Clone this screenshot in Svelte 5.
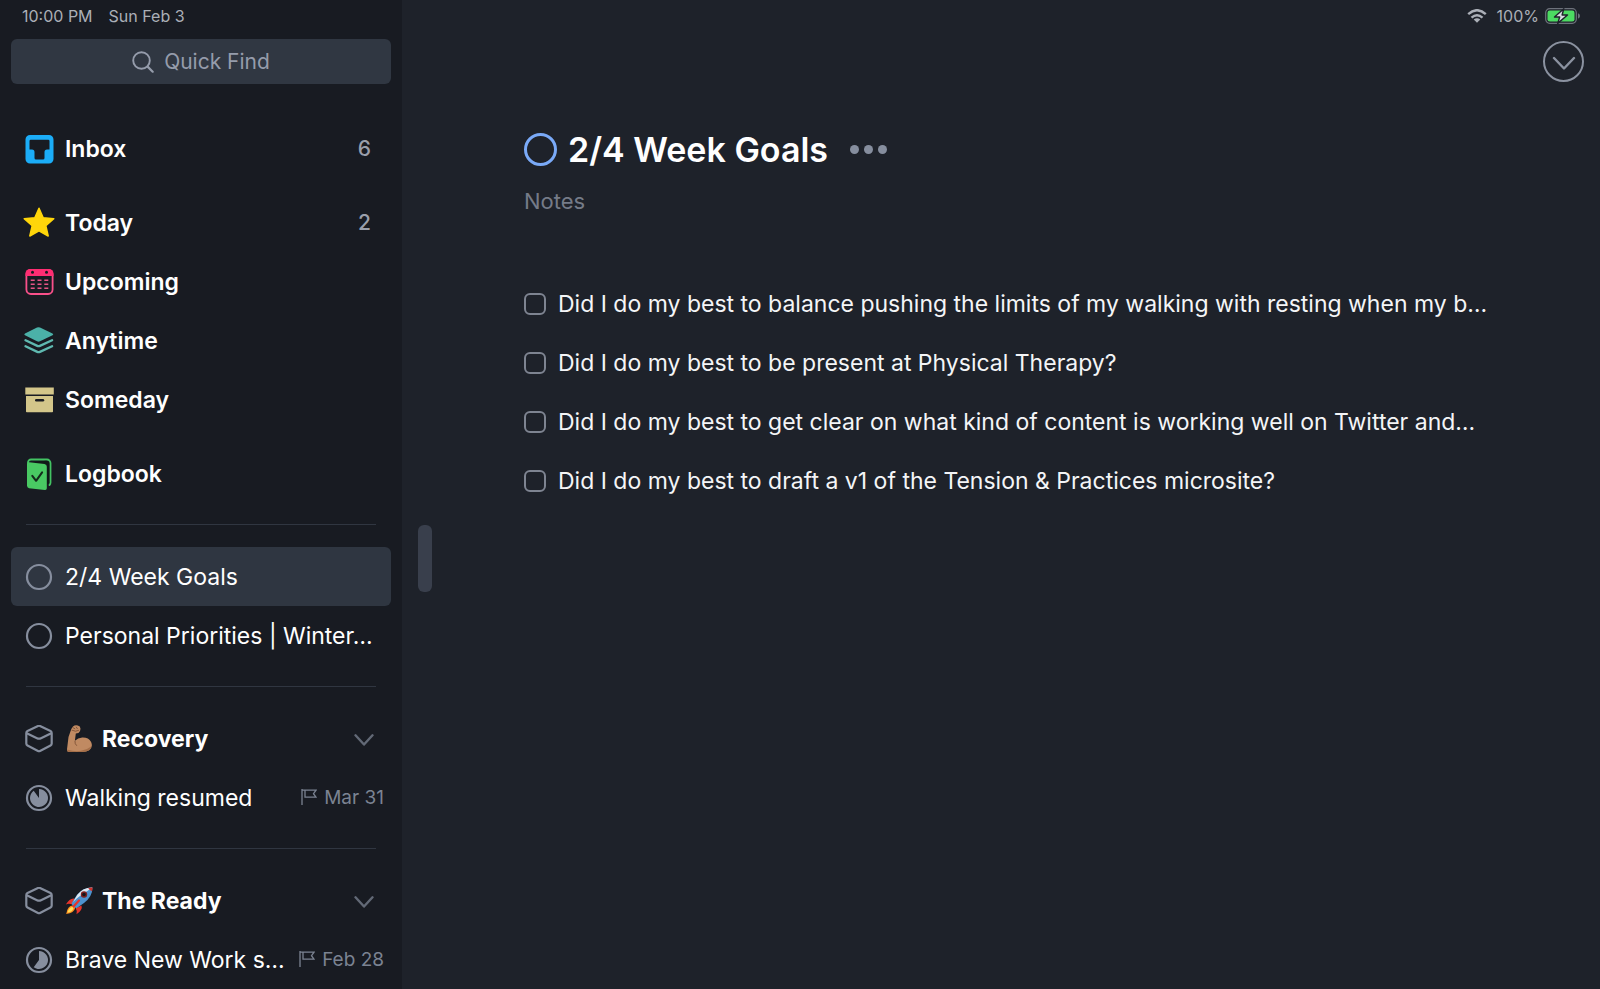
<script lang="ts">
	interface Project {
		title: string;
		progress: number;
		deadline?: string;
	}

	interface Area {
		name: string;
		emoji: 'arm' | 'rocket';
		open: boolean;
		projects: Project[];
	}

	const lists = [
		{ id: 'inbox', label: 'Inbox', count: 6, gap: false },
		{ id: 'today', label: 'Today', count: 2, gap: true },
		{ id: 'upcoming', label: 'Upcoming', gap: false },
		{ id: 'anytime', label: 'Anytime', gap: false },
		{ id: 'someday', label: 'Someday', gap: false },
		{ id: 'logbook', label: 'Logbook', gap: true }
	];

	const projects: Project[] = [
		{ title: '2/4 Week Goals', progress: 0 },
		{ title: 'Personal Priorities | Winter…', progress: 0 }
	];

	let areas: Area[] = $state([
		{
			name: 'Recovery',
			emoji: 'arm',
			open: true,
			projects: [{ title: 'Walking resumed', progress: 0.9, deadline: 'Mar 31' }]
		},
		{
			name: 'The Ready',
			emoji: 'rocket',
			open: true,
			projects: [{ title: 'Brave New Work s…', progress: 0.6, deadline: 'Feb 28' }]
		}
	]);

	let todos = $state([
		{ text: 'Did I do my best to balance pushing the limits of my walking with resting when my b…', done: false },
		{ text: 'Did I do my best to be present at Physical Therapy?', done: false },
		{ text: 'Did I do my best to get clear on what kind of content is working well on Twitter and…', done: false },
		{ text: 'Did I do my best to draft a v1 of the Tension & Practices microsite?', done: false }
	]);

	let selected = $state('2/4 Week Goals');
	let completed = $state(false);
	let notes = $state('');

	// pie slice, clockwise from twelve o'clock
	function slice(progress: number) {
		const angle = progress * Math.PI * 2;
		const x = 14 + 9 * Math.sin(angle);
		const y = 14 - 9 * Math.cos(angle);
		return `M14 14V5A9 9 0 ${progress > 0.5 ? 1 : 0} 1 ${x} ${y}Z`;
	}
</script>

{#snippet listIcon(id: string)}
	<svg class="icon" viewBox="0 0 32 32" aria-hidden="true">
		{#if id === 'inbox'}
			<path fill="#1badf8" fill-rule="evenodd" d="M7 2h19a4.500 4.500 0 0 1 4.500 4.500v19.500a4.500 4.500 0 0 1-4.500 4.500H7a4.500 4.500 0 0 1-4.500-4.500V6.500A4.500 4.500 0 0 1 7 2ZM6.500 8v8.500H9a2.500 2.500 0 0 1 2.500 2.500v6a1.500 1.500 0 0 0 1.500 1.500h7a1.500 1.500 0 0 0 1.500-1.500v-6a2.500 2.500 0 0 1 2.500-2.500h2.500V8a1.200 1.200 0 0 0-1.200-1.200H7.700A1.200 1.200 0 0 0 6.500 8Z" />
		{:else if id === 'today'}
			<path fill="#ffd60a" stroke="#ffd60a" stroke-width="1.5" stroke-linejoin="round" d="M16 1.2l4.2 9.5 10.600 1-8 7 2.400 10.300L16 23.800l-9.200 5.200 2.400-10.300-8-7 10.600-1Z" />
		{:else if id === 'upcoming'}
			<rect x="3.400" y="4" width="26.200" height="24" rx="4.500" fill="none" stroke="#f9508a" stroke-width="1.800" />
			<path fill="#ff2d72" d="M7 3h19a4.500 4.500 0 0 1 4.500 4.500V10h-28V7.500A4.500 4.500 0 0 1 7 3Z" />
			<g fill="#181b22"><circle cx="9.500" cy="6.200" r="1.500" /><circle cx="23.500" cy="6.200" r="1.500" /></g>
			<path stroke="#e75586" stroke-width="1.600" d="M7.700 14.300h4m2.800 0h4m2.800 0h4M7.700 18.300h4m2.800 0h4m2.800 0h4M7.700 22.300h4m2.800 0h4m2.800 0h4" />
		{:else if id === 'anytime'}
			<path fill="#4bb1a8" d="M14 2.500q1.500-.7 3 0l12.500 6q1.500.9 0 1.800l-12.500 6q-1.500.7-3 0l-12-6q-1.500-.9 0-1.800Z" />
			<path fill="none" stroke="#5fb9b0" stroke-width="2.300" stroke-linecap="round" stroke-linejoin="round" d="M2.500 15.200l11.800 5.700q1.300.6 2.600 0l12.200-5.700M2.500 21.200l11.800 5.700q1.300.6 2.600 0l12.200-5.700" />
		{:else if id === 'someday'}
			<path fill="#d3c68a" d="M2.300 3.500h28.500v7H2.300Z" />
			<path fill="#d3c68a" d="M3 12h27v15.500a.8.8 0 0 1-.8.8H3.800a.8.8 0 0 1-.8-.8Z" />
			<path stroke="#181b22" stroke-width="2.600" stroke-linecap="round" d="M13.300 16.300h6.600" />
		{:else}
			<path fill="none" stroke="#43c463" stroke-width="1.800" stroke-linecap="round" d="M5 5V4.500a3 3 0 0 1 3-3h16a3.500 3.500 0 0 1 3.500 3.500v19.500q0 1.500-1 2.500" />
			<path fill="#101a17" d="M8 4.200L23 2.800q3 0 3.200 3.200v19l-2 1V6Z" />
			<path fill="#49c963" d="M6 4.200l15.500 1.900q2.300.4 2.300 2.700v21.500q0 1.800-2 1.600L6 30.200q-2-.3-2-2.600V6q0-2 2-1.800Z" />
			<path fill="none" stroke="#142b1b" stroke-width="2" stroke-linecap="round" stroke-linejoin="round" d="M9.300 17.800l3.800 5 6-8.400" />
		{/if}
	</svg>
{/snippet}

{#snippet chevron()}
	<svg width="20" height="14" viewBox="0 0 20 14" aria-hidden="true">
		<path fill="none" stroke="currentColor" stroke-width="2.400" stroke-linecap="round" stroke-linejoin="round" d="M1.500 3.300L10 12.500l8.500-9.200" />
	</svg>
{/snippet}

{#snippet projectRow(project: Project)}
	<a
		class="row project"
		class:selected={selected === project.title}
		href="#project"
		onclick={() => (selected = project.title)}
	>
		<svg class="ring" viewBox="0 0 28 28" aria-hidden="true">
			<circle cx="14" cy="14" r="12" fill="none" stroke="currentColor" stroke-width="2.200" />
			{#if project.progress > 0}
				<path fill="currentColor" d={slice(project.progress)} />
			{/if}
		</svg>
		<span class="name">{project.title}</span>
		{#if project.deadline}
			<span class="deadline">
				<svg width="16" height="17" viewBox="0 0 16 17" aria-hidden="true">
					<path fill="none" stroke="currentColor" stroke-width="1.300" d="M1 0v16M1 1.200h14l-2.500 3.500 2.500 3.500H4V1.200" />
				</svg>
				{project.deadline}
			</span>
		{/if}
	</a>
{/snippet}

<div class="app">
	<aside class="sidebar">
		<div class="status">
			<span>10:00 PM</span>
			<span>Sun Feb 3</span>
		</div>

		<button class="find" type="button">
			<svg width="22" height="22" viewBox="0 0 22 22" aria-hidden="true">
				<circle cx="9.500" cy="9.500" r="8.300" fill="none" stroke="currentColor" stroke-width="1.900" />
				<path stroke="currentColor" stroke-width="2.200" stroke-linecap="round" d="M15.600 15.600L20.700 20.700" />
			</svg>
			Quick Find
		</button>

		<nav class="lists">
			{#each lists as list}
				<a
					class="row list"
					class:gap={list.gap}
					class:selected={selected === list.id}
					href="#{list.id}"
					onclick={() => (selected = list.id)}
				>
					{@render listIcon(list.id)}
					<span class="name">{list.label}</span>
					{#if list.count}
						<span class="count">{list.count}</span>
					{/if}
				</a>
			{/each}

			<hr />

			{#each projects as project}
				{@render projectRow(project)}
			{/each}

			{#each areas as area}
				<hr />
				<button class="row area" type="button" aria-expanded={area.open} onclick={() => (area.open = !area.open)}>
					<svg class="ring" viewBox="0 0 28 28" aria-hidden="true">
						<path fill="none" stroke="currentColor" stroke-width="2.200" stroke-linejoin="round" d="M13 1q1-.5 2 0l10.500 5q1.200.7 1.200 2v10.600q0 1.300-1.200 2L15 26q-1 .5-2 0L2.500 20.600q-1.200-.7-1.200-2V8q0-1.300 1.200-2Z" />
						<path fill="none" stroke="currentColor" stroke-width="2.200" stroke-linejoin="round" d="M1.800 8.200q5 2.500 10.200 5 2 1 4 0 5.200-2.500 10.200-5" />
					</svg>
					{#if area.emoji === 'arm'}
						<svg class="emoji" viewBox="0 0 28 28" role="img" aria-label="Flexed arm">
							<path fill="#c08a62" d="M8 1.500Q10-.2 12.800.6q2.700.6 2.700 3.200 0 2.700-2 4.200l-2.700.6-.9 7.200q3-3 7.300-3.200 6.300-.3 8.900 4.400 2.300 5-2 8.200-2.500 1.800-7 1.800H4.300q-2.500 0-2.300-2.700L3.500 12 6.300 4Z" />
							<path fill="#a56f49" d="M2 24.500q8 2.500 14 1.300 6-.8 10.500-4.500-1 5.700-9.500 5.700H4.500q-2.700 0-2.500-2.500Z" />
							<path fill="none" stroke="#7f5135" stroke-width=".9" stroke-linecap="round" d="M7 5.200l3.500 1 3-.8M8 2.700l1.800 1M11.300 2.100l1 1.500M9.900 16.300q-.2 2.800 1.600 4.200" />
						</svg>
					{:else}
						<svg class="emoji" viewBox="0 0 28 28" role="img" aria-label="Rocket">
							<path fill="#e5342b" d="M9.500 11.500Q5 10.500.8 17.500q3.500-1.500 6 .1ZM16.500 18.500q1.500 4.500-5 8.700 1-3.500-.8-6Z" />
							<path fill="#ff8f1c" d="M8.500 18.500Q2.500 18 1.200 27q8-1 9-6.300Z" />
							<path fill="#ffe05a" d="M7.800 20Q4 20 2.400 25.700q5.300-1 6-4.500Z" />
							<path fill="#4d93cf" d="M27.500.5Q18 .3 11.500 8.500L6.700 16q.3 3.700 4.800 5.200l7.500-5.200Q27.500 9.500 27.500.5Z" />
							<path fill="#dce6ef" d="M27.500.5Q18 .3 12.500 7.500L8 15q4.500-4.500 9-7.500Q22.500 4 27.500.5Z" />
							<path fill="#d0312b" d="M27.500.5q-2-.1-4.300.5 1.300 2.500 3.800 3.300.5-1.800.5-3.800Z" />
							<circle cx="19" cy="7.500" r="3.200" fill="#7c2020" />
							<circle cx="19" cy="7.500" r="1.800" fill="#14171c" />
							<path stroke="#e5342b" stroke-width="2.200" stroke-linecap="round" d="M14 13.500l-5.500 6" />
						</svg>
					{/if}
					<span class="name">{area.name}</span>
					{@render chevron()}
				</button>
				{#if area.open}
					{#each area.projects as project}
						{@render projectRow(project)}
					{/each}
				{/if}
			{/each}
		</nav>
	</aside>

	<main class="main">
		<div class="handle"></div>

		<div class="pane">
			<div class="status right">
				<svg width="20" height="14" viewBox="0 0 20 14" aria-label="Wi-Fi" role="img">
					<path fill="none" stroke="currentColor" stroke-width="2.400" d="M1.200 5.200Q10-2.800 18.800 5.200M4.500 8.600q5.500-4.700 11 0" />
					<path fill="currentColor" d="M10 13.800L6.700 10.600q3.300-2.500 6.600 0Z" />
				</svg>
				<span class="percent">100%</span>
				<svg width="36" height="16" viewBox="0 0 36 16" aria-label="Charging" role="img">
					<rect x=".7" y=".7" width="30.600" height="14.600" rx="4" fill="none" stroke="#6d727b" stroke-width="1.200" />
					<rect x="2.500" y="2.500" width="27" height="11" rx="2.300" fill="#4cdb62" />
					<path fill="#6d727b" d="M33 5.300q2 .8 2 2.700t-2 2.700Z" />
					<path fill="#d9dde2" stroke="#1e222a" stroke-width="1.400" stroke-linejoin="round" d="M18.800.8L9.500 9h5.200l-2 6.400L22.500 7h-5.400Z" />
				</svg>
			</div>

			<div class="toolbar">
				<button class="close" type="button" aria-label="Close">
					<svg width="24" height="16" viewBox="0 0 24 16" aria-hidden="true">
						<path fill="none" stroke="currentColor" stroke-width="2.400" stroke-linecap="round" stroke-linejoin="round" d="M2 4l10 10.500L22 4" />
					</svg>
				</button>
			</div>

			<section class="content">
				<header class="heading">
					<input type="checkbox" class="complete" aria-label="Complete project" bind:checked={completed} />
					<h1>2/4 Week Goals</h1>
					<button class="more" type="button" aria-label="More">
						<i></i><i></i><i></i>
					</button>
				</header>

				<input class="notes" type="text" placeholder="Notes" aria-label="Notes" bind:value={notes} />

				<ul class="todos">
					{#each todos as todo}
						<li>
							<label class="todo">
								<input type="checkbox" bind:checked={todo.done} />
								<span>{todo.text}</span>
							</label>
						</li>
					{/each}
				</ul>
			</section>
		</div>
	</main>
</div>

<style>
	:global(body) {
		background: #1e222a;
	}

	.app {
		--muted: #868e9e;
		display: flex;
		height: 100vh;
		overflow: hidden;
		font-family: Inter, 'Liberation Sans', sans-serif;
		font-size: 23px;
		color: #fff;
	}

	button,
	input {
		font: inherit;
		color: inherit;
		margin: 0;
		padding: 0;
		border: 0;
		background: none;
	}

	button {
		cursor: pointer;
	}

	svg {
		flex: none;
	}

	.sidebar {
		flex: none;
		display: flex;
		flex-direction: column;
		width: 402px;
		padding: 0 11px;
		box-sizing: border-box;
		background: #181b22;
	}

	.status {
		display: flex;
		align-items: center;
		gap: 16px;
		flex: none;
		height: 32px;
		padding-left: 11px;
		font-size: 16px;
		color: #abafb7;
	}

	.find {
		display: flex;
		align-items: center;
		justify-content: center;
		gap: 10px;
		flex: none;
		height: 45px;
		margin-top: 7px;
		border-radius: 6px;
		background: #303742;
		color: #959cab;
		font-size: 21px;
	}

	.lists {
		display: flex;
		flex-direction: column;
		margin-top: 35px;
	}

	.row {
		display: flex;
		align-items: center;
		flex: none;
		height: 59px;
		padding: 0 15px 0 14px;
		border-radius: 6px;
		text-align: left;
		text-decoration: none;
		color: #fff;
	}

	.row.gap {
		margin-top: 15px;
	}

	.row.selected {
		background: #2f3641;
	}

	.row .name {
		flex: 1;
		min-width: 0;
		white-space: nowrap;
	}

	.list {
		padding-left: 12px;
		padding-right: 20px;
		font-weight: 600;
	}

	.icon {
		width: 32px;
		height: 32px;
		margin-right: 10px;
	}

	.count {
		font-size: 21px;
		font-weight: 500;
		color: #9a9fab;
	}

	.ring {
		width: 28px;
		height: 28px;
		margin-right: 12px;
		color: var(--muted);
	}

	.project {
		padding-right: 7px;
	}

	.area {
		padding-right: 17px;
		font-weight: 700;
		color: #fff;
	}

	.area > svg:last-child {
		color: #626976;
	}

	.emoji {
		width: 28px;
		height: 28px;
		margin-right: 9px;
	}

	.deadline {
		display: flex;
		align-items: center;
		gap: 7px;
		font-size: 19px;
		color: #7b8392;
	}

	hr {
		width: 350px;
		height: 1px;
		margin: 21px 15px 22px;
		border: 0;
		background: #303641;
		box-sizing: border-box;
	}

	.main {
		flex: 1;
		min-width: 0;
		display: flex;
		background: #1e222a;
	}

	.handle {
		flex: none;
		align-self: center;
		width: 14px;
		height: 67px;
		margin: 128px 0 0 16px;
		border-radius: 6px;
		background: #393f4c;
	}

	.pane {
		flex: 1;
		min-width: 0;
		display: flex;
		flex-direction: column;
	}

	.status.right {
		justify-content: flex-end;
		gap: 6px;
		padding-right: 19px;
	}

	.status.right .percent {
		margin-left: 4px;
	}

	.toolbar {
		display: flex;
		justify-content: flex-end;
		padding: 9px 16px 0 0;
	}

	.close {
		display: flex;
		align-items: center;
		justify-content: center;
		width: 41px;
		height: 41px;
		border: 2px solid #8b92a0;
		border-radius: 50%;
		color: #8b92a0;
	}

	.content {
		padding: 43px 112px 0 92px;
	}

	.heading {
		display: flex;
		align-items: center;
		height: 48px;
	}

	.complete {
		appearance: none;
		flex: none;
		width: 33px;
		height: 33px;
		border: 3px solid #7aaaf8;
		border-radius: 50%;
	}

	.complete:checked {
		background: #7aaaf8;
	}

	h1 {
		margin: 0 0 0 11px;
		font-size: 34px;
		font-weight: 600;
		white-space: nowrap;
	}

	.more {
		display: flex;
		gap: 5px;
		margin-left: 22px;
	}

	.more i {
		width: 9px;
		height: 9px;
		border-radius: 50%;
		background: var(--muted);
	}

	.notes {
		display: block;
		width: 100%;
		height: 32px;
		margin-top: 12px;
		outline: none;
		font-size: 22px;
	}

	.notes::placeholder {
		color: #757b88;
		opacity: 1;
	}

	.todos {
		margin: 57px 0 0;
		padding: 0;
		list-style: none;
	}

	.todo {
		display: flex;
		align-items: center;
		gap: 12px;
		height: 59px;
		white-space: nowrap;
		color: #f4f5f7;
	}

	.todo input {
		appearance: none;
		flex: none;
		width: 22px;
		height: 22px;
		box-sizing: border-box;
		border: 2px solid #7e8491;
		border-radius: 6px;
	}

	.todo input:checked {
		background: #7aaaf8;
		border-color: #7aaaf8;
	}
</style>
